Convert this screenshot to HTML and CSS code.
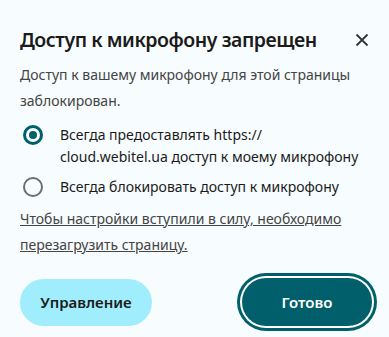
FILE: index.html
```html
<!DOCTYPE html>
<html lang="ru">
<head>
    <meta charset="UTF-8">
    <meta name="viewport" content="width=device-width, initial-scale=1.0">
    <title>Доступ к микрофону запрещен</title>
    <link rel="stylesheet" href="styles.css">
</head>
<body>
    <div class="dialog">
        <div class="header">
            <h1 class="title">Доступ к микрофону запрещен</h1>
            <button class="close" aria-label="Закрыть">
                <svg width="14" height="14" viewBox="0 0 14 14">
                    <path d="M1.5 1.5 L12.5 12.5 M12.5 1.5 L1.5 12.5" stroke="#333" stroke-width="1.8" fill="none"/>
                </svg>
            </button>
        </div>
        <p class="desc">Доступ к вашему микрофону для этой страницы заблокирован.</p>

        <div class="options">
            <label class="option">
                <span class="radio checked"></span>
                <span class="option-text">Всегда предоставлять https://<br>cloud.webitel.ua доступ к моему микрофону</span>
            </label>
            <label class="option">
                <span class="radio"></span>
                <span class="option-text">Всегда блокировать доступ к микрофону</span>
            </label>
        </div>

        <a class="note" href="#">Чтобы настройки вступили в силу, необходимо перезагрузить страницу.</a>

        <div class="buttons">
            <button class="btn btn-manage">Управление</button>
            <button class="btn btn-done">Готово</button>
        </div>
    </div>
</body>
</html>
```

FILE: styles.css
```css
body {
    margin: 0;
    background: #f7fcfe;
    font-family: "Noto Sans", "Open Sans", sans-serif;
    color: #1b1b1b;
}
.dialog {
    width: 389px;
    height: 337px;
    box-sizing: border-box;
    padding: 26px 12px 0 20px;
}
.header {
    display: flex;
    justify-content: space-between;
    align-items: center;
    height: 28px;
}
.title {
    margin: 0;
    font-size: 19.5px;
    font-weight: 600;
    letter-spacing: -0.45px;
    line-height: 28px;
    color: #1b1b1b;
}
.close {
    width: 28px;
    height: 28px;
    border: none;
    background: none;
    padding: 0;
    display: flex;
    align-items: center;
    justify-content: center;
    margin-right: 1px;
}
.desc {
    margin: 8px 0 0;
    font-size: 14px;
    line-height: 26px;
    color: #444;
    width: 340px;
}
.options {
    margin-top: 10px;
    display: flex;
    flex-direction: column;
    gap: 8px;
}
.option {
    display: flex;
    align-items: flex-start;
    font-size: 14px;
    line-height: 22px;
    color: #1b1b1b;
}
.radio {
    width: 20px;
    height: 20px;
    box-sizing: border-box;
    border: 2.5px solid #6e6e6e;
    border-radius: 50%;
    margin: 1px 17px 0 3px;
    flex-shrink: 0;
    display: flex;
    align-items: center;
    justify-content: center;
}
.radio.checked {
    border: 3px solid #005f6a;
}
.radio.checked::after {
    content: "";
    width: 8px;
    height: 8px;
    border-radius: 50%;
    background: #005f6a;
}
.note {
    display: block;
    margin-top: 8px;
    font-size: 14px;
    line-height: 26px;
    color: #444;
    width: 340px;
}
.buttons {
    display: flex;
    justify-content: space-between;
    align-items: center;
    margin-top: 20px;
}
.btn {
    font-family: inherit;
    font-size: 15px;
    font-weight: 600;
    border-radius: 24px;
    cursor: pointer;
}
.btn-manage {
    width: 132px;
    height: 47px;
    border: none;
    background: #a0eefd;
    color: #1b1b1b;
}
.btn-done {
    width: 130px;
    height: 48px;
    margin-right: 5px;
    border: none;
    background: #005f6a;
    color: #fff;
    box-shadow: 0 0 0 2px #fff, 0 0 0 5px #005f6a;
}
```
